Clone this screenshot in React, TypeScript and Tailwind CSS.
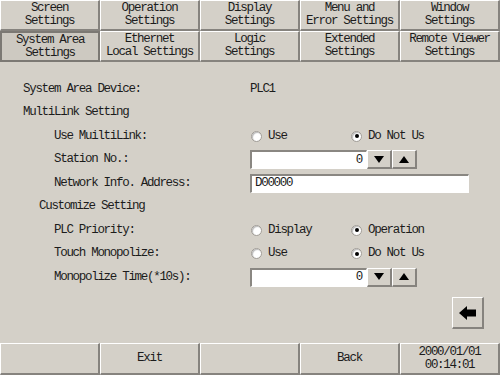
import React from 'react';

const font = { fontFamily: '"Liberation Mono", "DejaVu Sans Mono", monospace' };

const raised =
  'border-t border-l border-t-white border-l-white border-r-2 border-b-2 border-r-[#86837e] border-b-[#86837e] bg-[#d4d0c8]';
const sunken =
  'border-t-2 border-l-2 border-t-[#8a8782] border-l-[#8a8782] border-b border-r border-b-white border-r-white bg-white';

const tabs = [
  ['Screen', 'Settings'],
  ['Operation', 'Settings'],
  ['Display', 'Settings'],
  ['Menu and', 'Error Settings'],
  ['Window', 'Settings'],
  ['System Area', 'Settings'],
  ['Ethernet', 'Local Settings'],
  ['Logic', 'Settings'],
  ['Extended', 'Settings'],
  ['Remote Viewer', 'Settings'],
];

function Radio({ label, on }: { label: string; on?: boolean }) {
  return (
    <div className="flex w-[100px] items-center gap-[6px] pl-[1px]">
      <span className="flex h-[11px] w-[11px] items-center justify-center rounded-full border border-[#a09c96] bg-white shadow-[inset_1px_1px_1px_#bbb]">
        {on && <span className="h-[4px] w-[4px] rounded-full bg-black" />}
      </span>
      <span>{label}</span>
    </div>
  );
}

function Spinner({ value }: { value: string }) {
  return (
    <div className="flex items-center">
      <div className={`${sunken} flex h-[19px] w-[117px] items-center justify-end pr-[4px]`}>{value}</div>
      <button className={`${raised} flex h-[19px] w-[25px] items-center justify-center`}>
        <svg width="10" height="7" viewBox="0 0 10 7">
          <polygon points="0,0 10,0 5,7" fill="#000" />
        </svg>
      </button>
      <button className={`${raised} flex h-[19px] w-[25px] items-center justify-center`}>
        <svg width="10" height="7" viewBox="0 0 10 7">
          <polygon points="0,7 10,7 5,0" fill="#000" />
        </svg>
      </button>
    </div>
  );
}

function Row({ indent, label, children }: { indent: string; label: string; children?: React.ReactNode }) {
  return (
    <div className="flex h-[23.5px] items-center">
      <div className={`w-[250px] ${indent}`}>{label}</div>
      {children}
    </div>
  );
}

export default function App() {
  return (
    <div
      className="flex h-[375px] w-[500px] flex-col overflow-hidden bg-[#d4d0c8] text-[12.5px] leading-[13px] tracking-[-1.3px] text-[#1c1c1c]"
      style={font}
    >
      <div className="grid h-[62px] grid-cols-5 grid-rows-2">
        {tabs.map(([a, b], i) => (
          <div
            key={a + b}
            className={`flex flex-col items-center justify-center ${
              i === 5 ? 'border-2 border-[#7c7974] bg-[#cdc9c1]' : raised
            }`}
          >
            <span>{a}</span>
            <span>{b}</span>
          </div>
        ))}
      </div>

      <div className="flex flex-1 flex-col pt-[15.5px]">
        <Row indent="pl-[23px]" label="System Area Device:">
          <span>PLC1</span>
        </Row>
        <Row indent="pl-[23px]" label="MultiLink Setting" />
        <Row indent="pl-[54px]" label="Use MuiltiLink:">
          <Radio label="Use" />
          <Radio label="Do Not Us" on />
        </Row>
        <Row indent="pl-[54px]" label="Station No.:">
          <Spinner value="0" />
        </Row>
        <Row indent="pl-[54px]" label="Network Info. Address:">
          <div className={`${sunken} flex h-[19px] w-[219px] items-center pl-[3px]`}>D00000</div>
        </Row>
        <Row indent="pl-[39px]" label="Customize Setting" />
        <Row indent="pl-[54px]" label="PLC Priority:">
          <Radio label="Display" />
          <Radio label="Operation" on />
        </Row>
        <Row indent="pl-[54px]" label="Touch Monopolize:">
          <Radio label="Use" />
          <Radio label="Do Not Us" on />
        </Row>
        <Row indent="pl-[54px]" label="Monopolize Time(*10s):">
          <Spinner value="0" />
        </Row>
        <div className="mt-[8px] flex justify-end pr-[16px]">
          <button className={`${raised} flex h-[32px] w-[32px] items-center justify-center`}>
            <svg width="17" height="14" viewBox="0 0 17 14">
              <polygon points="0,7 8,0 8,3.5 17,3.5 17,10.5 8,10.5 8,14" fill="#000" />
            </svg>
          </button>
        </div>
      </div>

      <div className="grid h-[32px] grid-cols-5">
        <div className={raised} />
        <div className={`${raised} flex items-center justify-center`}>Exit</div>
        <div className={raised} />
        <div className={`${raised} flex items-center justify-center`}>Back</div>
        <div className={`${raised} flex flex-col items-center justify-center leading-[13px]`}>
          <span>2000/01/01</span>
          <span>00:14:01</span>
        </div>
      </div>
    </div>
  );
}
